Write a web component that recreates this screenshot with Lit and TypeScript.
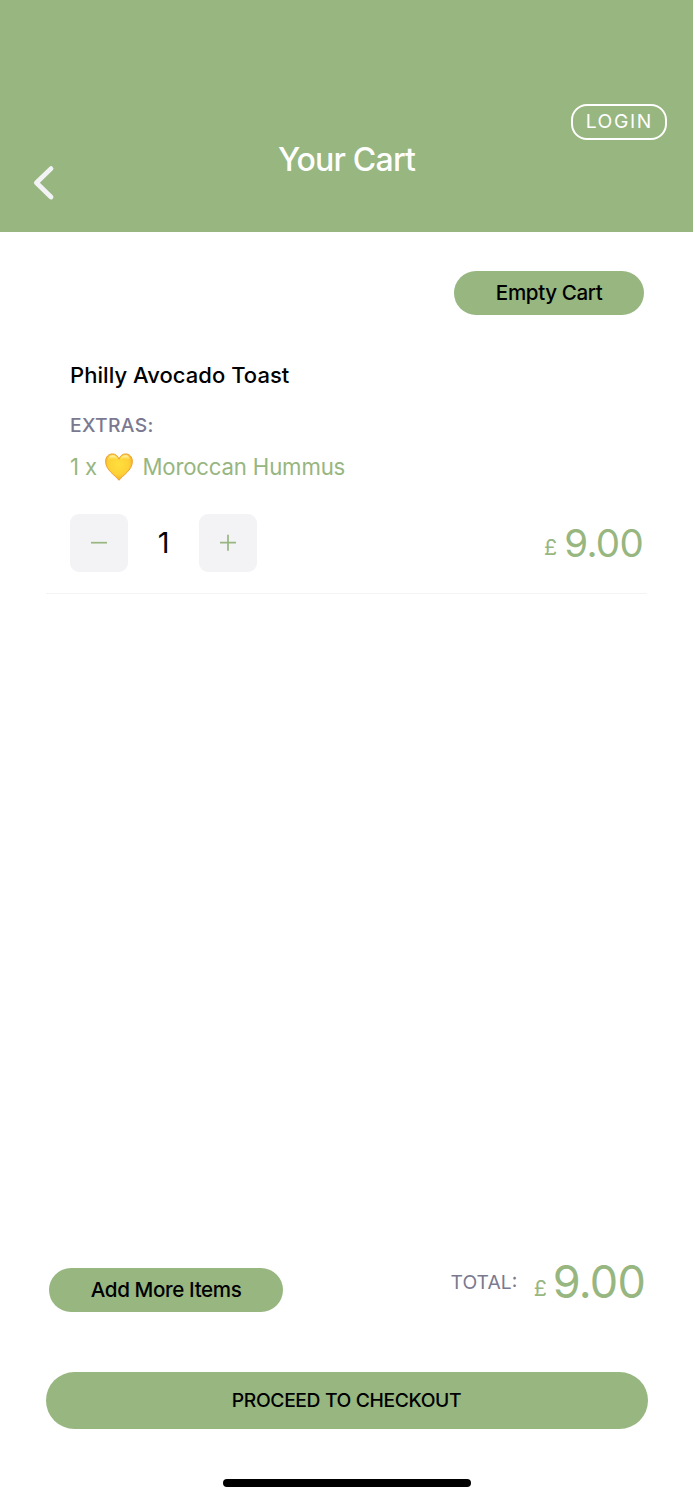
import { LitElement, html, css } from "lit";
import { customElement, property, state } from "lit/decorators.js";

@customElement("cart-header")
class CartHeader extends LitElement {
  static styles = css`
    :host { display: grid; grid-template-columns: 1fr auto 1fr; align-items: start; height: 231.6px; box-sizing: border-box; padding: 104px 26px 0 31px; background: #97b680; color: #fff; }
    .back { justify-self: start; margin-top: 59px; width: 26px; height: 40px; padding: 0; border: 0; background: none; }
    .back svg { display: block; }
    .title { margin: 36px 0 0 -5px; height: 40px; line-height: 40px; font-size: 32px; font-weight: 450; letter-spacing: -0.8px; white-space: nowrap; }
    .login { justify-self: end; width: 96.5px; height: 35.5px; box-sizing: border-box; padding: 0 0 1.5px 1px; border: 2px solid #fff; border-radius: 16px; background: none; color: #fff; font: 400 19.3px/28px Inter, sans-serif; letter-spacing: 1.6px; }
  `;
  render() {
    return html`
      <button class="back" aria-label="Back">
        <svg width="26" height="40" viewBox="0 0 26 40"><path d="M20 5.6 5.4 19.8 20 34" fill="none" stroke="#f3f2f5" stroke-width="4.8" stroke-linecap="round" stroke-linejoin="round"/></svg>
      </button>
      <h1 class="title">Your Cart</h1>
      <button class="login">LOGIN</button>`;
  }
}

@customElement("price-tag")
class PriceTag extends LitElement {
  @property({ type: Number }) value = 0;
  @property({ type: Boolean, reflect: true }) large = false;
  static styles = css`
    :host { display: flex; align-items: center; color: #97b680; white-space: nowrap; }
    .sign { font-size: 21.5px; line-height: 30px; margin: 8px 7px 0 0; }
    .amount { font-size: 38.5px; line-height: 50px; letter-spacing: -0.7px; margin-right: -1px; }
    :host([large]) .sign { margin: 12px 6px 0 0; }
    :host([large]) .amount { font-size: 45px; letter-spacing: -0.8px; margin-right: 0; }
  `;
  render() {
    return html`<span class="sign">£</span><span class="amount">${this.value.toFixed(2)}</span>`;
  }
}

@customElement("cart-item")
class CartItem extends LitElement {
  @state() quantity = 1;
  static styles = css`
    :host { display: block; margin: 45px 46px 0 46px; padding: 0 5px 21px 24px; border-bottom: 1px solid #f4f4f5; }
    .name { margin: 0; line-height: 30px; font-size: 22px; font-weight: 500; letter-spacing: 0.05px; }
    .label { margin-top: 20px; line-height: 30px; font-size: 19.3px; font-weight: 450; letter-spacing: 0.35px; color: #7b7990; }
    .extra { display: flex; align-items: center; margin-top: 12.5px; height: 30px; line-height: 30px; font-size: 22.2px; letter-spacing: -0.17px; color: #97b680; white-space: nowrap; }
    .heart { margin: 0 9px 0 8.5px; }
    .row { display: flex; align-items: center; margin-top: 31.5px; height: 58.5px; }
    .step { display: grid; place-items: center; width: 58.2px; height: 58.2px; padding: 0; border: 0; border-radius: 9px; background: #f3f2f5; }
    .count { width: 71px; text-align: center; font-size: 29px; line-height: 40px; }
    price-tag { margin-left: auto; }
  `;
  render() {
    return html`
      <h2 class="name">Philly Avocado Toast</h2>
      <div class="label">EXTRAS:</div>
      <div class="extra"><span>1 x</span>
        <svg class="heart" width="28" height="28" viewBox="0 0 28 28">
          <defs>
            <radialGradient id="glow" cx=".48" cy=".4" r=".65"><stop offset="0" stop-color="#ffdf3d"/><stop offset=".6" stop-color="#fdd136"/><stop offset="1" stop-color="#f3a127"/></radialGradient>
            <linearGradient id="shine" x2="0" y2="1"><stop offset="0" stop-color="#fff9bd"/><stop offset="1" stop-color="#ffe14a" stop-opacity="0"/></linearGradient>
          </defs>
          <path d="M14 27.3C10.5 22.5.6 17.2.6 8.5.6 3.9 3.5.9 7.3.9c3.3 0 5.7 2 6.7 5.3C15 2.900 17.4.9 20.7.9c3.800 0 6.700 3 6.700 7.600C27.400 17.200 17.500 22.500 14 27.300Z" fill="url(#glow)" stroke="#eb9826" stroke-width=".9"/>
          <path d="M2.5 8C2.8 4.2 4.8 2.2 7.4 2.2s4.700 1.600 5.600 4.300C10 5 5.500 5 2.500 8Zm23 0c-.3-3.800-2.300-5.800-4.900-5.800S15.900 3.800 15 6.500c3-1.500 7.500-1.500 10.500 1.500Z" fill="url(#shine)"/>
        </svg>
        <span>Moroccan Hummus</span></div>
      <div class="row">
        <button class="step" aria-label="Remove one" @click=${() => (this.quantity = Math.max(1, this.quantity - 1))}>
          <svg width="18" height="18"><path d="M1 8.7H17" stroke="#97b680" stroke-width="1.7"/></svg>
        </button>
        <span class="count">${this.quantity}</span>
        <button class="step" aria-label="Add one" @click=${() => this.quantity++}>
          <svg width="18" height="18"><path d="M1 8.7H17M9 .7V16.7" stroke="#97b680" stroke-width="1.7"/></svg>
        </button>
        <price-tag .value=${9 * this.quantity}></price-tag>
      </div>`;
  }
}

@customElement("app-root")
class AppRoot extends LitElement {
  static styles = css`
    :host { display: flex; flex-direction: column; height: 1500px; overflow: hidden; background: #fff; color: #000; font-family: Inter, sans-serif; }
    .pill { display: block; height: 44.2px; padding: 0; border: 0; border-radius: 29px; background: #97b680; color: #000; font: 450 20.6px/44px Inter, sans-serif; letter-spacing: -0.38px; white-space: nowrap; }
    .empty { align-self: flex-end; width: 190.4px; margin: 39px 48.7px 0 0; }
    .summary { display: flex; margin: auto 48px 0 48.7px; height: 62px; align-items: flex-start; }
    .add { width: 234.8px; margin-top: 11px; }
    .total { display: flex; align-items: center; height: 50px; margin-left: auto; }
    .total-label { margin: 0 16.5px 0 0; font-size: 19.3px; color: #7b7990; }
    .checkout { flex: none; height: 56.8px; margin: 53px 45.5px 0; font-size: 19.3px; line-height: 57px; }
    .home { flex: none; align-self: center; width: 248px; height: 8.3px; margin: 50px 0 13px; border-radius: 5px; background: #000; }
  `;
  render() {
    return html`
      <cart-header></cart-header>
      <button class="pill empty">Empty Cart</button>
      <cart-item></cart-item>
      <div class="summary">
        <button class="pill add">Add More Items</button>
        <div class="total"><span class="total-label">TOTAL:</span><price-tag large .value=${9}></price-tag></div>
      </div>
      <button class="pill checkout">PROCEED TO CHECKOUT</button>
      <div class="home"></div>`;
  }
}
